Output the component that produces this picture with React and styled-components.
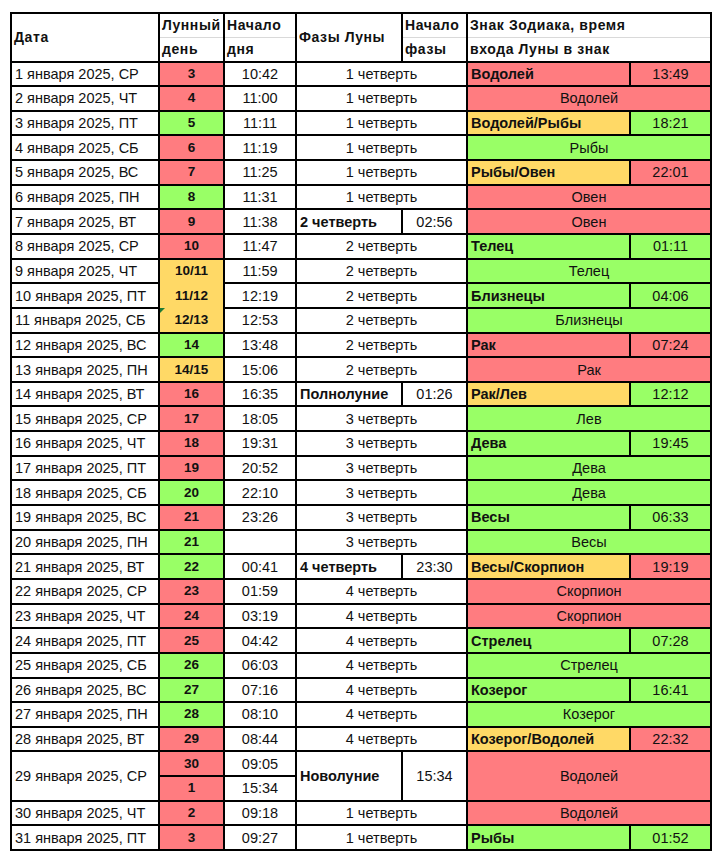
import React from 'react';
import styled, { createGlobalStyle, css } from 'styled-components';

const GlobalStyle = createGlobalStyle`
  body {
    margin: 0;
    background: #fff;
    font-family: "Liberation Sans", Arial, sans-serif;
    color: #111;
  }
`

const colors = {
  red: '#ff7c80',
  green: '#99ff66',
  yellow: '#ffd966',
  white: '#fff',
}

const Page = styled.div`
  padding: 12px 0 0 10px;
`

const Sheet = styled.table`
  border-collapse: collapse;
  table-layout: fixed;
  width: 700px;
  border: 2px solid #000;
`

const HeadRow = styled.tr`
  height: 24.25px;
`

const Row = styled.tr`
  height: 24.65px;
`

const HeadCell = styled.th`
  border: 2px solid #000;
  ${({ $top }) => $top && css`border-bottom: 1px solid #d9d9d9;`}
  ${({ $bottom }) => $bottom && css`border-top: 1px solid #d9d9d9;`}
  padding: 0 2px;
  text-align: left;
  font-size: 14px;
  letter-spacing: 0.6px;
  font-weight: bold;
  white-space: nowrap;
  overflow: hidden;
`

const Cell = styled.td`
  position: relative;
  border: 2px solid #000;
  padding: 0 3px;
  font-size: 14.5px;
  line-height: 16px;
  white-space: nowrap;
  overflow: hidden;
  text-align: ${({ $align }) => $align || 'center'};
  font-weight: ${({ $bold }) => ($bold ? 'bold' : 'normal')};
  background: ${({ $bg }) => colors[$bg] || colors.white};
  ${({ $joinTop }) => $joinTop && css`border-top-style: hidden;`}
  ${({ $comment }) => $comment && css`
    &::before {
      content: '';
      position: absolute;
      top: 0;
      left: 0;
      border-top: 5px solid #1e7b34;
      border-right: 5px solid transparent;
    }
  `}
`

const DayCell = styled(Cell)`
  font-size: 13.5px;
  font-weight: bold;
`

// [дата, лунный день, цвет, начало дня, фаза, время фазы, знак, цвет знака, время входа, цвет времени]
const rows = [
  ['1 января 2025, СР', '3', 'red', '10:42', '1 четверть', '', 'Водолей', 'red', '13:49', 'red'],
  ['2 января 2025, ЧТ', '4', 'red', '11:00', '1 четверть', '', 'Водолей', 'red'],
  ['3 января 2025, ПТ', '5', 'green', '11:11', '1 четверть', '', 'Водолей/Рыбы', 'yellow', '18:21', 'green'],
  ['4 января 2025, СБ', '6', 'red', '11:19', '1 четверть', '', 'Рыбы', 'green'],
  ['5 января 2025, ВС', '7', 'red', '11:25', '1 четверть', '', 'Рыбы/Овен', 'yellow', '22:01', 'red'],
  ['6 января 2025, ПН', '8', 'green', '11:31', '1 четверть', '', 'Овен', 'red'],
  ['7 января 2025, ВТ', '9', 'red', '11:38', '2 четверть', '02:56', 'Овен', 'red'],
  ['8 января 2025, СР', '10', 'red', '11:47', '2 четверть', '', 'Телец', 'green', '01:11', 'green'],
  ['9 января 2025, ЧТ', '10/11', 'yellow', '11:59', '2 четверть', '', 'Телец', 'green'],
  ['10 января 2025, ПТ', '11/12', 'yellow', '12:19', '2 четверть', '', 'Близнецы', 'green', '04:06', 'green'],
  ['11 января 2025, СБ', '12/13', 'yellow', '12:53', '2 четверть', '', 'Близнецы', 'green'],
  ['12 января 2025, ВС', '14', 'green', '13:48', '2 четверть', '', 'Рак', 'red', '07:24', 'red'],
  ['13 января 2025, ПН', '14/15', 'yellow', '15:06', '2 четверть', '', 'Рак', 'red'],
  ['14 января 2025, ВТ', '16', 'red', '16:35', 'Полнолуние', '01:26', 'Рак/Лев', 'yellow', '12:12', 'green'],
  ['15 января 2025, СР', '17', 'red', '18:05', '3 четверть', '', 'Лев', 'green'],
  ['16 января 2025, ЧТ', '18', 'red', '19:31', '3 четверть', '', 'Дева', 'green', '19:45', 'green'],
  ['17 января 2025, ПТ', '19', 'red', '20:52', '3 четверть', '', 'Дева', 'green'],
  ['18 января 2025, СБ', '20', 'green', '22:10', '3 четверть', '', 'Дева', 'green'],
  ['19 января 2025, ВС', '21', 'red', '23:26', '3 четверть', '', 'Весы', 'green', '06:33', 'green'],
  ['20 января 2025, ПН', '21', 'green', '', '3 четверть', '', 'Весы', 'green'],
  ['21 января 2025, ВТ', '22', 'green', '00:41', '4 четверть', '23:30', 'Весы/Скорпион', 'yellow', '19:19', 'red'],
  ['22 января 2025, СР', '23', 'red', '01:59', '4 четверть', '', 'Скорпион', 'red'],
  ['23 января 2025, ЧТ', '24', 'red', '03:19', '4 четверть', '', 'Скорпион', 'red'],
  ['24 января 2025, ПТ', '25', 'red', '04:42', '4 четверть', '', 'Стрелец', 'green', '07:28', 'green'],
  ['25 января 2025, СБ', '26', 'green', '06:03', '4 четверть', '', 'Стрелец', 'green'],
  ['26 января 2025, ВС', '27', 'green', '07:16', '4 четверть', '', 'Козерог', 'green', '16:41', 'green'],
  ['27 января 2025, ПН', '28', 'green', '08:10', '4 четверть', '', 'Козерог', 'green'],
  ['28 января 2025, ВТ', '29', 'red', '08:44', '4 четверть', '', 'Козерог/Водолей', 'yellow', '22:32', 'red'],
]

const tail = [
  ['30 января 2025, ЧТ', '2', 'red', '09:18', '1 четверть', '', 'Водолей', 'red'],
  ['31 января 2025, ПТ', '3', 'red', '09:27', '1 четверть', '', 'Рыбы', 'green', '01:52', 'green'],
]

const DayRow = ({ data, prev }) => {
  const [date, day, dayBg, start, phase, phaseTime, sign, signBg, signTime, timeBg] = data
  const joinTop = prev && prev[2] === 'yellow' && dayBg === 'yellow'

  return (
    <Row>
      <Cell $align="left">{date}</Cell>
      <DayCell $bg={dayBg} $joinTop={joinTop} $comment={day === '12/13'}>{day}</DayCell>
      <Cell>{start}</Cell>
      {phaseTime ? (
        <>
          <Cell $align="left" $bold>{phase}</Cell>
          <Cell>{phaseTime}</Cell>
        </>
      ) : (
        <Cell colSpan={2}>{phase}</Cell>
      )}
      {signTime ? (
        <>
          <Cell $align="left" $bold $bg={signBg}>{sign}</Cell>
          <Cell $bg={timeBg}>{signTime}</Cell>
        </>
      ) : (
        <Cell colSpan={2} $bg={signBg}>{sign}</Cell>
      )}
    </Row>
  )
}

const App = () => (
  <>
    <GlobalStyle />
    <Page>
      <Sheet>
        <colgroup>
          <col style={{ width: 148 }} />
          <col style={{ width: 65 }} />
          <col style={{ width: 72 }} />
          <col style={{ width: 106 }} />
          <col style={{ width: 65 }} />
          <col style={{ width: 163 }} />
          <col style={{ width: 81 }} />
        </colgroup>
        <thead>
          <HeadRow>
            <HeadCell rowSpan={2}>Дата</HeadCell>
            <HeadCell $top>Лунный</HeadCell>
            <HeadCell $top>Начало</HeadCell>
            <HeadCell rowSpan={2}>Фазы Луны</HeadCell>
            <HeadCell $top>Начало</HeadCell>
            <HeadCell $top colSpan={2}>Знак Зодиака, время</HeadCell>
          </HeadRow>
          <HeadRow>
            <HeadCell $bottom>день</HeadCell>
            <HeadCell $bottom>дня</HeadCell>
            <HeadCell $bottom>фазы</HeadCell>
            <HeadCell $bottom colSpan={2}>входа Луны в знак</HeadCell>
          </HeadRow>
        </thead>
        <tbody>
          {rows.map((r, i) => (
            <DayRow key={r[0]} data={r} prev={rows[i - 1]} />
          ))}
          <Row>
            <Cell rowSpan={2} $align="left">29 января 2025, СР</Cell>
            <DayCell $bg="red">30</DayCell>
            <Cell>09:05</Cell>
            <Cell rowSpan={2} $align="left" $bold>Новолуние</Cell>
            <Cell rowSpan={2}>15:34</Cell>
            <Cell rowSpan={2} colSpan={2} $bg="red">Водолей</Cell>
          </Row>
          <Row>
            <DayCell $bg="red">1</DayCell>
            <Cell>15:34</Cell>
          </Row>
          {tail.map(r => (
            <DayRow key={r[0]} data={r} />
          ))}
        </tbody>
      </Sheet>
    </Page>
  </>
)

export default App
